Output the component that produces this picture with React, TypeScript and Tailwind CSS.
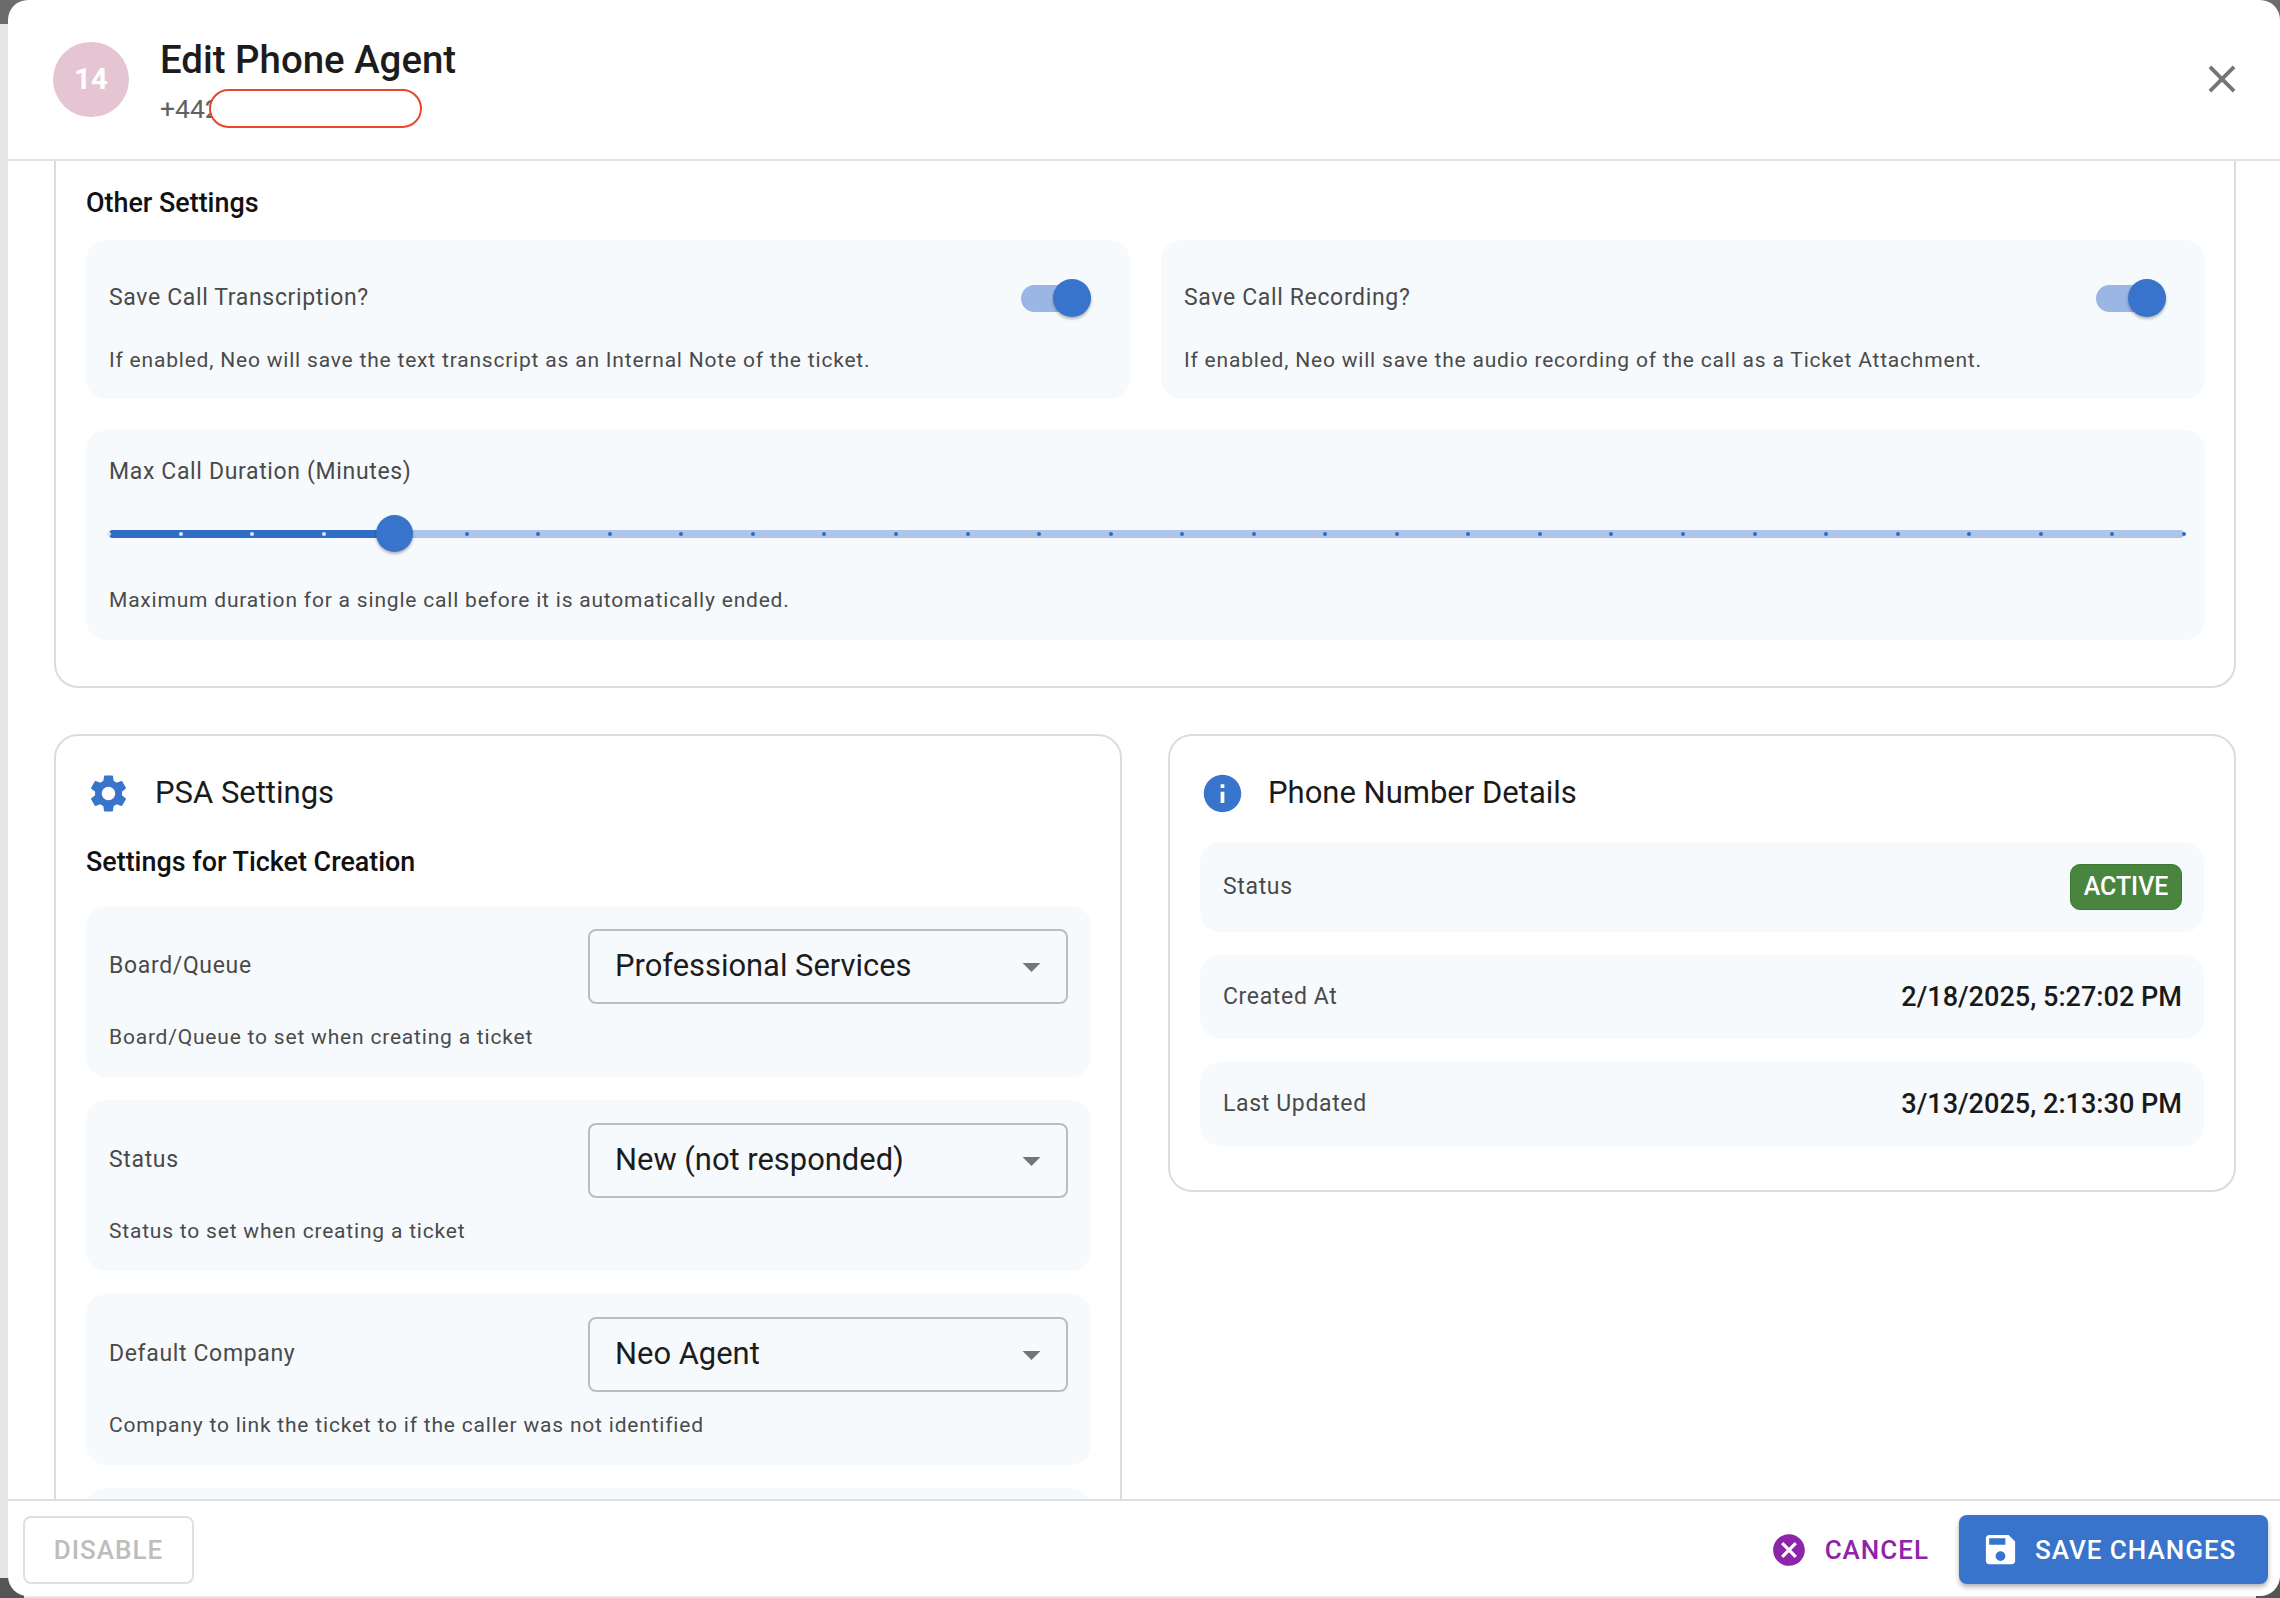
const SETTINGS_PATH =
  "M19.14 12.94c.04-.3.06-.61.06-.94 0-.32-.02-.64-.07-.94l2.03-1.58c.18-.14.23-.41.12-.61l-1.92-3.32c-.12-.22-.37-.29-.59-.22l-2.39.96c-.5-.38-1.03-.7-1.62-.94l-.36-2.54c-.04-.24-.24-.41-.48-.41h-3.84c-.24 0-.43.17-.47.41l-.36 2.54c-.59.24-1.13.57-1.62.94l-2.39-.96c-.22-.08-.47 0-.59.22L2.74 8.87c-.12.21-.08.47.12.61l2.03 1.58c-.05.3-.09.63-.09.94s.02.64.07.94l-2.03 1.58c-.18.14-.23.41-.12.61l1.92 3.32c.12.22.37.29.59.22l2.39-.96c.5.38 1.03.7 1.62.94l.36 2.54c.05.24.24.41.48.41h3.84c.24 0 .44-.17.47-.41l.36-2.54c.59-.24 1.13-.56 1.62-.94l2.39.96c.22.08.47 0 .59-.22l1.92-3.32c.12-.22.07-.47-.12-.61l-2.01-1.58zM12 15.6c-1.98 0-3.6-1.62-3.6-3.6s1.62-3.6 3.6-3.6 3.6 1.62 3.6 3.6-1.62 3.6-3.6 3.6z";
const INFO_PATH =
  "M12 2C6.48 2 2 6.48 2 12s4.48 10 10 10 10-4.48 10-10S17.52 2 12 2zm1 15h-2v-6h2v6zm0-8h-2V7h2v2z";
const SAVE_PATH =
  "M17 3H5c-1.11 0-2 .9-2 2v14c0 1.1.89 2 2 2h14c1.1 0 2-.9 2-2V7l-4-4zm-5 16c-1.66 0-3-1.34-3-3s1.34-3 3-3 3 1.34 3 3-1.34 3-3 3zm3-10H5V5h10v4z";
const CANCEL_PATH =
  "M12 2C6.47 2 2 6.47 2 12s4.47 10 10 10 10-4.47 10-10S17.53 2 12 2zm5 13.59L15.59 17 12 13.41 8.41 17 7 15.59 10.59 12 7 8.41 8.41 7 12 10.59 15.59 7 17 8.41 13.41 12 17 15.59z";
const CLOSE_PATH =
  "M19 6.41 17.59 5 12 10.59 6.41 5 5 6.41 10.59 12 5 17.59 6.41 19 12 13.41 17.59 19 19 17.59 13.41 12z";

function Icon({ d, className }: { d: string; className: string }) {
  return (
    <svg viewBox="0 0 24 24" fill="currentColor" className={className}>
      <path d={d} />
    </svg>
  );
}

function Toggle() {
  return (
    <div className="relative mr-[16px] h-[27px] w-[70px] rounded-full bg-[#9ab6e4]">
      <div className="absolute right-0 top-[-6px] h-[38px] w-[38px] rounded-full bg-[#3874cb] shadow-[0_2px_3px_rgba(0,0,0,0.3)]" />
    </div>
  );
}

function TogglePanel({ label, help }: { label: string; help: string }) {
  return (
    <div className="h-[159px] rounded-[20px] bg-[#f7fafd] px-[23px] pt-[38px]">
      <div className="flex h-[40px] items-center justify-between">
        <span className="text-[23px] tracking-[0.65px] text-[#4a4a4a]">{label}</span>
        <Toggle />
      </div>
      <p className="mt-[27px] text-[21px] leading-[30px] tracking-[0.8px] text-[#4a4a4a]">{help}</p>
    </div>
  );
}

function DurationSlider() {
  const marks = Array.from({ length: 30 }, (_, i) => i);
  return (
    <div className="relative mt-[43px] h-[8px] w-[2075px] rounded-full bg-[#aec5e9]">
      <div className="h-full w-[286px] rounded-full bg-[#2f6cc6]" />
      <div className="absolute inset-x-[-2px] top-[2px] flex justify-between">
        {marks.map((i) => (
          <span
            key={i}
            className={i < 5 ? "h-[4px] w-[4px] rounded-full bg-[#dbe6f6]" : "h-[4px] w-[4px] rounded-full bg-[#2f6cc6]"}
          />
        ))}
      </div>
      <div className="absolute left-[267px] top-[-15px] h-[37px] w-[37px] rounded-full bg-[#3874cb] shadow-[0_2px_3px_rgba(0,0,0,0.3)]" />
    </div>
  );
}

function SelectRow({ label, value, help }: { label: string; value: string; help: string }) {
  return (
    <div className="h-[171px] rounded-[20px] bg-[#f7fafd] pl-[23px] pr-[23px] pt-[23px]">
      <div className="flex items-center justify-between">
        <span className="text-[23px] tracking-[0.65px] text-[#4a4a4a]">{label}</span>
        <div className="flex h-[75px] w-[480px] items-center justify-between rounded-[8px] border-2 border-[#bcbcbc] pl-[25px] pr-[13px]">
          <span className="text-[30.9px] text-[#1c1c1c]">{value}</span>
          <svg viewBox="0 0 24 24" fill="#757575" className="h-[43px] w-[43px]">
            <path d="M7 10l5 5 5-5z" />
          </svg>
        </div>
      </div>
      <p className="mt-[18px] text-[21px] leading-[30px] tracking-[0.8px] text-[#4a4a4a]">{help}</p>
    </div>
  );
}

function DetailRow({ label, value, tall }: { label: string; value?: string; tall?: boolean }) {
  return (
    <div
      className={
        tall
          ? "flex h-[90px] items-center justify-between rounded-[20px] bg-[#f7fafd] pl-[23px] pr-[22px]"
          : "flex h-[84px] items-center justify-between rounded-[20px] bg-[#f7fafd] pl-[23px] pr-[22px]"
      }
    >
      <span className="text-[23px] tracking-[0.65px] text-[#4a4a4a]">{label}</span>
      {value ? (
        <span className="text-[27.1px] font-medium text-[#1a1a1a]">{value}</span>
      ) : (
        <span className="flex h-[46px] w-[112px] items-center justify-center rounded-[10px] border border-[#3c7a33] bg-[#4a8540] text-[24.9px] font-medium text-white">
          ACTIVE
        </span>
      )}
    </div>
  );
}

export default function App() {
  return (
    <div className="relative h-[1598px] w-[2280px] overflow-hidden bg-[#e6e6e4] pb-[2px] pl-[8px] font-[Roboto,sans-serif]">
      <div className="absolute left-0 top-0 h-[24px] w-[30px] bg-[#6b6b6b]" />
      <div className="absolute right-0 top-0 h-[24px] w-[24px] bg-[#6b6b6b]" />
      <div className="absolute bottom-0 left-0 h-[20px] w-[24px] bg-[#555555]" />
      <div className="absolute bottom-0 right-0 h-[20px] w-[24px] bg-[#555555]" />

      <div className="relative flex h-full flex-col overflow-hidden rounded-[20px] bg-white">
        <header className="flex h-[161px] shrink-0 items-start border-b-2 border-[#e0e0e0] pl-[45px]">
          <div className="mt-[42px] flex h-[75px] w-[76px] items-center justify-center rounded-full bg-[#e6c5d3] text-[29px] font-bold text-white">
            14
          </div>
          <div className="ml-[31px] mt-[38px]">
            <h1 className="text-[38.4px] font-medium leading-[44px] text-[#1c1c1c]">Edit Phone Agent</h1>
            <div className="relative mt-[10px] text-[26.5px] leading-[34px] text-[#616161]">
              +442
              <div className="absolute left-[49px] top-[-3px] h-[39px] w-[213px] rounded-full border-2 border-[#e8472b] bg-white" />
            </div>
          </div>
          <Icon d={CLOSE_PATH} className="ml-auto mr-[35px] mt-[56px] h-[46px] w-[46px] text-[#757575]" />
        </header>

        <main className="min-h-0 flex-1 overflow-hidden pl-[46px] pr-[44px]">
          <section className="rounded-b-[24px] border-2 border-t-0 border-[#dcdcdc] pb-[46px] pl-[30px] pr-[29px] pt-[26px]">
            <h2 className="text-[26.9px] font-medium leading-[32px] text-[#111111]">Other Settings</h2>
            <div className="mt-[21px] grid grid-cols-2 gap-[31px]">
              <TogglePanel
                label="Save Call Transcription?"
                help="If enabled, Neo will save the text transcript as an Internal Note of the ticket."
              />
              <TogglePanel
                label="Save Call Recording?"
                help="If enabled, Neo will save the audio recording of the call as a Ticket Attachment."
              />
            </div>
            <div className="mt-[31px] h-[210px] rounded-[20px] bg-[#f7fafd] px-[23px] pt-[27px]">
              <div className="text-[23px] leading-[30px] tracking-[0.65px] text-[#4a4a4a]">Max Call Duration (Minutes)</div>
              <DurationSlider />
              <p className="mt-[47px] text-[21px] leading-[30px] tracking-[0.8px] text-[#4a4a4a]">
                Maximum duration for a single call before it is automatically ended.
              </p>
            </div>
          </section>

          <div className="mt-[46px] grid grid-cols-2 items-start gap-[46px]">
            <section className="rounded-[24px] border-2 border-[#dcdcdc] pl-[30px] pr-[29px] pt-[34px]">
              <div className="flex h-[46px] items-center gap-[24px]">
                <Icon d={SETTINGS_PATH} className="h-[45px] w-[45px] text-[#3874cb]" />
                <h2 className="text-[31px] text-[#1a1a1a]">PSA Settings</h2>
              </div>
              <h3 className="mt-[30px] text-[26.9px] font-medium leading-[32px] text-[#111111]">
                Settings for Ticket Creation
              </h3>
              <div className="mt-[28px] flex flex-col gap-[23px]">
                <SelectRow label="Board/Queue" value="Professional Services" help="Board/Queue to set when creating a ticket" />
                <SelectRow label="Status" value="New (not responded)" help="Status to set when creating a ticket" />
                <SelectRow
                  label="Default Company"
                  value="Neo Agent"
                  help="Company to link the ticket to if the caller was not identified"
                />
                <div className="h-[171px] rounded-[20px] bg-[#f7fafd]" />
              </div>
            </section>

            <section className="rounded-[24px] border-2 border-[#dcdcdc] pb-[44px] pl-[30px] pr-[30px] pt-[34px]">
              <div className="flex h-[46px] items-center gap-[23px]">
                <Icon d={INFO_PATH} className="h-[45px] w-[45px] text-[#3874cb]" />
                <h2 className="text-[31px] text-[#1a1a1a]">Phone Number Details</h2>
              </div>
              <div className="mt-[26px] flex flex-col gap-[23px]">
                <DetailRow label="Status" tall />
                <DetailRow label="Created At" value="2/18/2025, 5:27:02 PM" />
                <DetailRow label="Last Updated" value="3/13/2025, 2:13:30 PM" />
              </div>
            </section>
          </div>
        </main>

        <footer className="flex h-[97px] shrink-0 items-center justify-between border-t-2 border-[#e0e0e0] pl-[15px] pr-[12px] pt-[2px]">
          <button className="h-[68px] w-[171px] rounded-[8px] border-2 border-[#e0e0e0] pt-[2px] text-[26px] font-medium tracking-[1px] text-[#bdbdbd]">
            DISABLE
          </button>
          <div className="flex items-center gap-[30px]">
            <div className="flex items-center gap-[17px] text-[#8e24aa]">
              <Icon d={CANCEL_PATH} className="h-[38px] w-[38px]" />
              <span className="pt-[2px] text-[26px] font-medium tracking-[1px]">CANCEL</span>
            </div>
            <button className="flex h-[69px] w-[309px] items-center rounded-[8px] bg-[#3874cb] pl-[22px] text-white shadow-[0_3px_5px_rgba(0,0,0,0.3)]">
              <Icon d={SAVE_PATH} className="h-[39px] w-[39px]" />
              <span className="ml-[15px] pt-[2px] text-[26px] font-medium tracking-[1px]">SAVE CHANGES</span>
            </button>
          </div>
        </footer>
      </div>
    </div>
  );
}
